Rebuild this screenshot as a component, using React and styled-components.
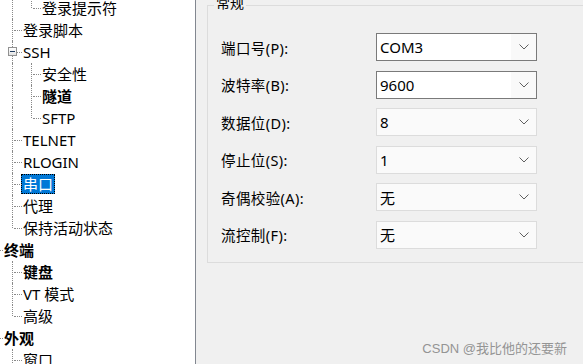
import React from 'react';
import styled, { createGlobalStyle, css } from 'styled-components';

const GlobalStyle = createGlobalStyle`
  html, body {
    margin: 0;
    padding: 0;
    background: #f0f0f0;
    overflow: hidden;
  }
  body {
    font-family: "Noto Sans", "Noto Sans CJK SC", sans-serif;
    color: #000;
  }
`;

const Frame = styled.div`
  position: relative;
  display: flex;
  width: 583px;
  height: 364px;
  overflow: hidden;
  background: #f0f0f0;
`;

// left tree view
const TreePanel = styled.div`
  flex-shrink: 0;
  width: 195px;
  height: 100%;
  background: #fff;
  border-right: 1px solid #828790;
  overflow: hidden;
`;

const TreeList = styled.div`
  margin: -3px 0 0 -17px;
`;

const Row = styled.div`
  display: flex;
  align-items: center;
  height: 22px;
  white-space: nowrap;
`;

const dotted = '1px dotted #8a8a8a';

const Guide = styled.div`
  position: relative;
  flex-shrink: 0;
  width: 19px;
  height: 100%;

  ${(p) => p.$line && css`
    &::before {
      content: '';
      position: absolute;
      left: 10px;
      top: 0;
      bottom: 0;
      border-left: ${dotted};
    }
  `}
`;

const Connector = styled.div`
  position: relative;
  flex-shrink: 0;
  width: 19px;
  height: 100%;

  &::before {
    content: '';
    position: absolute;
    left: 10px;
    top: 0;
    height: ${(p) => (p.$last ? '11px' : '22px')};
    border-left: ${dotted};
  }

  &::after {
    content: '';
    position: absolute;
    left: 12px;
    top: 11px;
    width: 8px;
    border-top: ${dotted};
  }
`;

const Expander = styled.span`
  position: absolute;
  z-index: 1;
  left: 6px;
  top: 6px;
  width: 7px;
  height: 7px;
  border: 1px solid #919191;
  background: linear-gradient(#ffffff, #e3e3e3);

  &::after {
    content: '';
    position: absolute;
    left: 1px;
    top: 3px;
    width: 5px;
    height: 1px;
    background: #1e3a5f;
  }
`;

const Label = styled.span`
  padding: 0 2px;
  height: 20px;
  line-height: 20px;
  font-size: 15px;
  font-weight: ${(p) => (p.$bold ? 700 : 400)};

  ${(p) => p.$selected && css`
    background: #0078d7;
    color: #fff;
    outline: 1px dotted #000;
    outline-offset: -1px;
  `}
`;

// right settings pane
const Content = styled.div`
  flex: 1;
  padding: 5px 0 0 11px;
  overflow: hidden;
`;

const GroupBox = styled.div`
  position: relative;
  width: 420px;
  height: 256px;
  border: 1px solid #dcdcdc;
`;

const Legend = styled.span`
  position: absolute;
  top: -12px;
  left: 6px;
  padding: 0 2px;
  background: #f0f0f0;
  font-size: 14px;
  line-height: 18px;
`;

const Form = styled.div`
  display: grid;
  grid-template-columns: 155px 161px;
  grid-auto-rows: 28px;
  row-gap: 9.6px;
  align-items: center;
  padding: 27px 0 0 13px;
`;

const FieldLabel = styled.label`
  font-size: 14.5px;
  letter-spacing: 0.4px;
`;

const Combo = styled.div`
  display: flex;
  align-items: center;
  height: 28px;
  box-sizing: border-box;
  border: 1px solid ${(p) => (p.$edit ? '#7a7a7a' : '#dcdcdc')};
  background: ${(p) => (p.$edit ? '#fff' : '#fafafa')};
  font-size: 15px;
`;

const ComboText = styled.span`
  flex: 1;
  padding-left: 3px;
`;

const ComboButton = styled.span`
  display: flex;
  align-items: center;
  justify-content: center;
  width: 25px;
  height: 100%;
  background: ${(p) => (p.$edit ? '#f9f9f9' : 'transparent')};
`;

const Watermark = styled.div`
  position: absolute;
  right: 16px;
  bottom: 7px;
  font-family: "Liberation Sans", "Noto Sans CJK SC", sans-serif;
  font-size: 13px;
  color: #949494;
`;

const tree = [
  { label: '登录提示符', guides: [true, true], last: true },
  { label: '登录脚本', guides: [true] },
  { label: 'SSH', guides: [true], expander: true },
  { label: '安全性', guides: [true, true] },
  { label: '隧道', guides: [true, true], bold: true },
  { label: 'SFTP', guides: [true, true], last: true },
  { label: 'TELNET', guides: [true] },
  { label: 'RLOGIN', guides: [true] },
  { label: '串口', guides: [true], selected: true },
  { label: '代理', guides: [true] },
  { label: '保持活动状态', guides: [true], last: true },
  { label: '终端', guides: [], bold: true },
  { label: '键盘', guides: [true], bold: true },
  { label: 'VT 模式', guides: [true] },
  { label: '高级', guides: [true], last: true },
  { label: '外观', guides: [], bold: true },
  { label: '窗口', guides: [true] },
];

const fields = [
  { label: '端口号(P):', value: 'COM3', edit: true },
  { label: '波特率(B):', value: '9600', edit: true },
  { label: '数据位(D):', value: '8' },
  { label: '停止位(S):', value: '1' },
  { label: '奇偶校验(A):', value: '无' },
  { label: '流控制(F):', value: '无' },
];

function Chevron() {
  return (
    <svg width="10" height="6" viewBox="0 0 10 6">
      <path d="M0.5 0.5 L5 5 L9.5 0.5" fill="none" stroke="#606060" strokeWidth="1" />
    </svg>
  );
}

export default function App() {
  return (
    <Frame>
      <GlobalStyle />
      <TreePanel>
        <TreeList>
          {tree.map((item, index) => (
            <Row key={`node-${index}`}>
              {item.guides.map((line, i) => (
                <Guide key={i} $line={line} />
              ))}
              <Connector $last={item.last}>
                {item.expander && <Expander />}
              </Connector>
              <Label $bold={item.bold} $selected={item.selected}>{item.label}</Label>
            </Row>
          ))}
        </TreeList>
      </TreePanel>

      <Content>
        <GroupBox>
          <Legend>常规</Legend>
          <Form>
            {fields.map((f) => (
              <React.Fragment key={f.label}>
                <FieldLabel>{f.label}</FieldLabel>
                <Combo $edit={f.edit}>
                  <ComboText>{f.value}</ComboText>
                  <ComboButton $edit={f.edit}>
                    <Chevron />
                  </ComboButton>
                </Combo>
              </React.Fragment>
            ))}
          </Form>
        </GroupBox>
      </Content>

      <Watermark>CSDN @我比他的还要新</Watermark>
    </Frame>
  );
}
